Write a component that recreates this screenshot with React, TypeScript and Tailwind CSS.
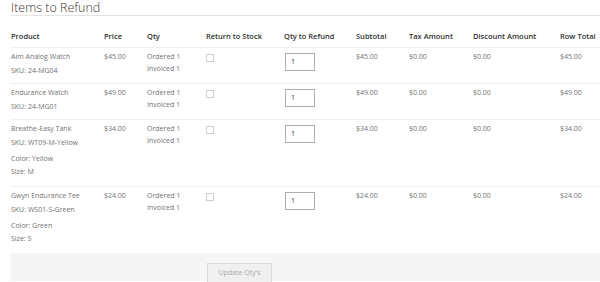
import React from 'react';

interface RefundItem {
  name: string;
  sku: string;
  price: string;
  options?: string[];
}

const items: RefundItem[] = [
  { name: 'Aim Analog Watch', sku: '24-MG04', price: '$45.00' },
  { name: 'Endurance Watch', sku: '24-MG01', price: '$49.00' },
  { name: 'Breathe-Easy Tank', sku: 'WT09-M-Yellow', price: '$34.00', options: ['Color: Yellow', 'Size: M'] },
  { name: 'Gwyn Endurance Tee', sku: 'WS01-S-Green', price: '$24.00', options: ['Color: Green', 'Size: S'] },
];

const cols = 'grid grid-cols-[93px_43px_59px_78px_72px_53px_64px_87px_1fr]';

const headers = [
  'Product',
  'Price',
  'Qty',
  'Return to Stock',
  'Qty to Refund',
  'Subtotal',
  'Tax Amount',
  'Discount Amount',
  'Row Total',
];

export default function App() {
  return (
    <div className="w-[600px] h-[282px] overflow-hidden bg-white pl-[11px] font-['Open_Sans',sans-serif]">
      <div className="h-[16px] border-b border-[#e3e3e3]">
        <h2 className="text-[12.5px] leading-[15px] font-light text-[#41362f]">Items to Refund</h2>
      </div>

      <div className={`${cols} border-b border-[#efefef] pt-[15px] pb-[6px]`}>
        {headers.map((h) => (
          <div key={h} className="text-[7.5px] leading-[10px] font-semibold text-[#303030] whitespace-nowrap">
            {h}
          </div>
        ))}
      </div>

      {items.map((item, index) => (
        <div
          key={item.sku}
          className={`${cols} text-[7px] text-[#727272] pt-[3px] pb-[6px] ${index < items.length - 1 ? 'border-b border-[#efefef]' : ''}`}
        >
          <div>
            <div className="leading-[12px]">{item.name}</div>
            <div className="leading-[12px] mt-[2px]">SKU: {item.sku}</div>
            {item.options && (
              <div className="mt-[3px] mb-[2px]">
                {item.options.map((o) => (
                  <div key={o} className="leading-[13px]">{o}</div>
                ))}
              </div>
            )}
          </div>
          <div className="leading-[12px]">{item.price}</div>
          <div>
            <div className="leading-[12px]">Ordered 1</div>
            <div className="leading-[12px]">Invoiced 1</div>
          </div>
          <div className="pt-[3px]">
            <div className="w-[8px] h-[8px] border border-[#cfcfcf] bg-white" />
          </div>
          <div className="pt-[2px] pl-[1px]">
            <div className="w-[30px] h-[18px] border border-[#adadad] bg-white text-[7px] leading-[16px] pl-[5px] text-[#303030]">
              1
            </div>
          </div>
          <div className="leading-[12px]">{item.price}</div>
          <div className="leading-[12px]">$0.00</div>
          <div className="leading-[12px]">$0.00</div>
          <div className="leading-[12px]">{item.price}</div>
        </div>
      ))}

      <div className={`${cols} bg-[#f5f5f5] h-[28px] pt-[4px]`}>
        <div className="col-start-4">
          <button className="ml-[1px] w-[65px] h-[20px] border border-[#dadada] bg-[#f0f0f0] text-[7px] text-[#a9a9a9]">
            Update Qty's
          </button>
        </div>
      </div>
    </div>
  );
}
